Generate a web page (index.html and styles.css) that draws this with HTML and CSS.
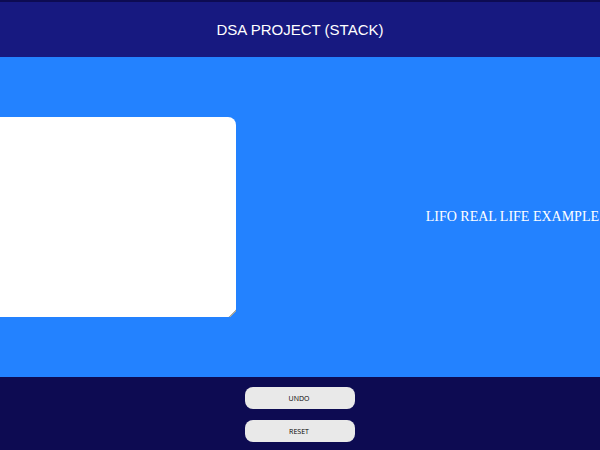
FILE: index.html
```html
<!DOCTYPE html>
<html lang="en">
<head>
<meta charset="utf-8">
<title>DSA Project (Stack)</title>
<link rel="stylesheet" href="styles.css">
</head>
<body>
<header class="header"><h1 class="title">DSA PROJECT (STACK)</h1></header>
<main class="main">
<textarea class="editor" aria-label="Text"></textarea>
<p class="caption">LIFO REAL LIFE EXAMPLE</p>
</main>
<footer class="actions">
<button class="button" type="button">UNDO</button>
<button class="button" type="button">RESET</button>
</footer>
</body>
</html>
```
FILE: styles.css
```css
* { box-sizing: border-box; }
body {
  margin: 0;
  min-height: 100vh;
  display: flex;
  flex-direction: column;
  background: #0d0b52;
  overflow-x: hidden;
}
.header {
  padding: 16px;
  border-top: 2px solid #0d0b52;
  background: #171980;
}
.title {
  margin: 0;
  color: #fff;
  font: 400 15px/23px "Liberation Sans", Arial, sans-serif;
  text-align: center;
}
.main {
  display: flex;
  align-items: center;
  justify-content: space-between;
  padding: 60px 1px 60px 0;
  background: #2382ff;
}
.editor {
  width: 42%;
  height: 200px;
  margin-left: -16px;
  border: 0;
  border-radius: 8px;
  background: #fff;
  resize: both;
}
.editor::-webkit-resizer {
  background: linear-gradient(135deg, transparent 76%, #a8a8a0 76%, #a8a8a0 83%, #2382ff 83%);
}
.caption {
  margin: 0;
  color: #fff;
  font: 14px/20px "Liberation Serif", "Times New Roman", serif;
}
.actions {
  flex: 1;
  display: flex;
  flex-direction: column;
  align-items: center;
  gap: 11px;
  padding: 10px 0 8px;
}
.button {
  width: 110px;
  height: 22px;
  padding: 2px 8px 0 6px;
  border: 0;
  border-radius: 8px;
  background: #e9e9e9;
  color: #000;
  font: 7px/10px "Open Sans", sans-serif;
}
```
